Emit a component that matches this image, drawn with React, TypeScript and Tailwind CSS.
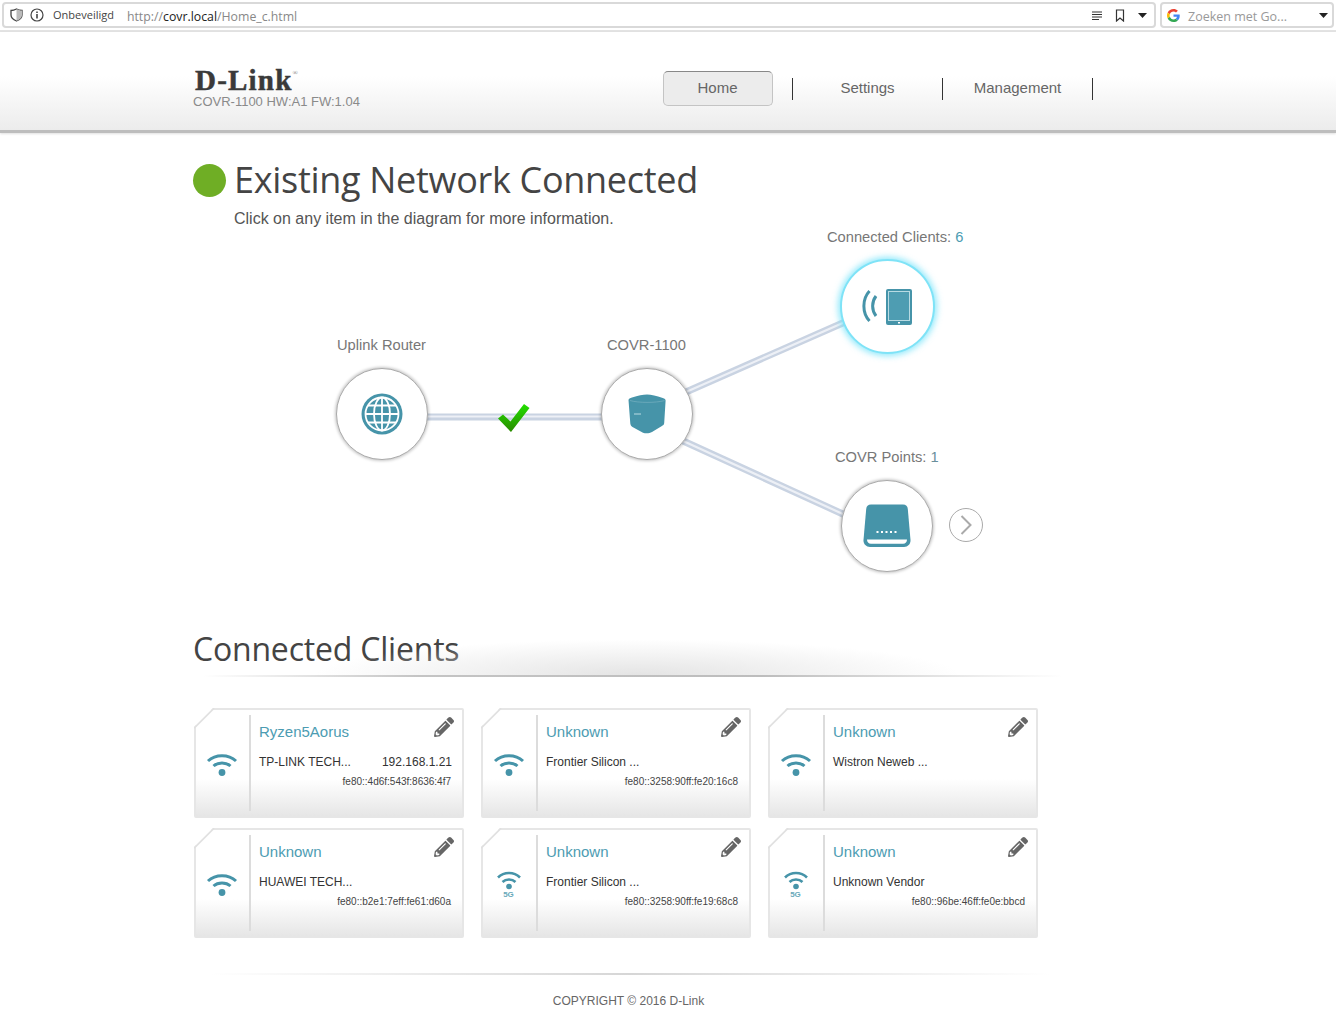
import { FaPencilAlt } from 'react-icons/fa';

const TEAL = '#4694a9';

const CLIENTS = [
  { name: 'Ryzen5Aorus', vendor: 'TP-LINK TECH...', ip: '192.168.1.21', mac: 'fe80::4d6f:543f:8636:4f7', five: false },
  { name: 'Unknown', vendor: 'Frontier Silicon ...', ip: '', mac: 'fe80::3258:90ff:fe20:16c8', five: false },
  { name: 'Unknown', vendor: 'Wistron Neweb ...', ip: '', mac: '', five: false },
  { name: 'Unknown', vendor: 'HUAWEI TECH...', ip: '', mac: 'fe80::b2e1:7eff:fe61:d60a', five: false },
  { name: 'Unknown', vendor: 'Frontier Silicon ...', ip: '', mac: 'fe80::3258:90ff:fe19:68c8', five: true },
  { name: 'Unknown', vendor: 'Unknown Vendor', ip: '', mac: 'fe80::96be:46ff:fe0e:bbcd', five: true },
];

function WifiIcon({ five }: { five: boolean }) {
  if (five) {
    return (
      <div className="flex flex-col items-center">
        <svg width="26" height="22" viewBox="0 0 26 22" fill="none" stroke={TEAL} strokeWidth="2.6">
          <path d="M2 8.500C8 2.500 18 2.500 24 8.500" />
          <path d="M6.500 13C10 9.600 16 9.600 19.500 13" />
          <circle cx="13" cy="17.500" r="2.800" fill={TEAL} stroke="none" />
        </svg>
        <span className="text-[8px] leading-[8px] font-bold text-[#6aa9ba]">5G</span>
      </div>
    );
  }
  return (
    <svg width="32" height="24" viewBox="0 0 32 24" fill="none" stroke={TEAL} strokeWidth="3">
      <path d="M2 9C9.500 2 22.500 2 30 9" />
      <path d="M7.500 14C12 10 20 10 24.500 14" />
      <circle cx="16" cy="20.500" r="3.400" fill={TEAL} stroke="none" />
    </svg>
  );
}

function ClientCard({ client }: { client: typeof CLIENTS[0] }) {
  return (
    <div className="relative h-[110px] flex border-2 border-[#e6e6e6] rounded-[2px] bg-gradient-to-b from-white from-65% to-[#e6e6e6] [clip-path:polygon(19px_0,100%_0,100%_100%,0_100%,0_19px)]">
      <svg className="absolute -left-[2px] -top-[2px]" width="21" height="21" viewBox="0 0 21 21">
        <path d="M0 20L20 0" stroke="#e0e0e0" strokeWidth="2" />
      </svg>
      <div className="w-[53px] shrink-0 flex items-center justify-center pt-[2px] -ml-[1px] mr-[1px]">
        <WifiIcon five={client.five} />
      </div>
      <div className="w-[2px] my-[5px] bg-[#dcdcdc]" />
      <div className="flex-1 min-w-0 pl-[8px] pr-[10px] pt-[12px]">
        <div className="flex items-start justify-between">
          <span className="text-[15px] leading-[20px] text-[#4c9cb2]">{client.name}</span>
          <FaPencilAlt className="text-[#666666] -mt-[5px] -mr-[2px]" size={20} />
        </div>
        <div className="flex justify-between mt-[10px] text-[12px] leading-[20px] text-[#333333]">
          <span>{client.vendor}</span>
          <span>{client.ip}</span>
        </div>
        <div className="text-right pr-[1px] text-[10px] leading-[20px] text-[#444444]">{client.mac}</div>
      </div>
    </div>
  );
}

function Circle({ left, top, size, glow, children }: { left: number; top: number; size: number; glow?: boolean; children: React.ReactNode }) {
  return (
    <div
      className={
        glow
          ? 'absolute rounded-full bg-white flex items-center justify-center border-2 border-[#7fe3f7] shadow-[0_0_6px_2px_rgba(110,225,250,0.75)]'
          : 'absolute rounded-full bg-white flex items-center justify-center border border-[#aaaaaa] shadow-[0_0_3px_1px_rgba(0,0,0,0.22)]'
      }
      style={{ left, top, width: size, height: size }}
    >
      {children}
    </div>
  );
}

function Label({ left, top, children }: { left: number; top: number; children: React.ReactNode }) {
  return (
    <div className="absolute text-[14.7px] leading-[20px] text-[#777777] whitespace-nowrap" style={{ left, top }}>
      {children}
    </div>
  );
}

function Diagram() {
  return (
    <div className="relative h-[370px]">
      {/* connector lines */}
      <svg className="absolute left-0 top-0" width="1336" height="370" fill="none">
        <g stroke="#c9d3e2" strokeWidth="7">
          <path d="M426 185H603" />
          <path d="M686 160L845 90" />
          <path d="M681 208L845 283" />
        </g>
        <g stroke="#edf0f6" strokeWidth="2.2">
          <path d="M426 184.500H603" />
          <path d="M686 160L845 90" />
          <path d="M681 208L845 283" />
        </g>
      </svg>

      <Label left={337} top={103}>Uplink Router</Label>
      <Label left={607} top={103}>COVR-1100</Label>
      <Label left={827} top={-5}>Connected Clients: <span className="text-[#4c9cb2]">6</span></Label>
      <Label left={835} top={215}>COVR Points: <span className="text-[#6a8f9c]">1</span></Label>

      <Circle left={336} top={136} size={92}>
        <svg width="42" height="42" viewBox="0 0 42 42" fill="none" stroke={TEAL}>
          <circle cx="21" cy="21" r="20.500" fill={TEAL} stroke="none" />
          <g stroke="#ffffff" strokeWidth="1.800">
            <circle cx="21" cy="21" r="16.500" />
            <ellipse cx="21" cy="21" rx="8" ry="16.500" />
            <path d="M21 4.500V37.500M4.500 21H37.500M7 12.500H35M7 29.500H35" />
          </g>
        </svg>
      </Circle>

      <Circle left={601} top={136} size={92}>
        <svg width="38" height="40" viewBox="0 0 38 40" className="-ml-[1px] -mt-[1px]">
          <path d="M0.500 6C0.500 4.500 2 4 4 3.400C10 1.600 15 0.400 19 0.400C23 0.400 29 2 34 3.800C36 4.500 37.600 5 37.600 6.600L36.200 29C36 30.800 35.200 31.400 33.500 32.200L24 38C21.500 39.600 17.500 39.600 15 38.800L4.500 33C3 32 2.500 31 2.300 29.500Z" fill={TEAL} />
          <path d="M2 6.500C10 9 28 9 36.500 6.600" fill="none" stroke="#7fb6c5" strokeWidth="0.600" />
          <path d="M6 20H13" stroke="#b9dbe3" strokeWidth="1" />
        </svg>
      </Circle>

      <Circle left={840} top={27} size={95} glow>
        <svg width="52" height="38" viewBox="0 0 52 38" className="-ml-[1px]" fill="none">
          <path d="M8.500 3C1 11 1 25 8.500 33" stroke={TEAL} strokeWidth="3" />
          <path d="M15 8C10.500 14 10.500 22 15 28" stroke={TEAL} strokeWidth="3" />
          <rect x="25" y="1" width="26" height="36" rx="2" fill={TEAL} />
          <rect x="27.500" y="3.500" width="21" height="29" fill="#4e9db2" stroke="#b8dbe3" strokeWidth="1" />
          <rect x="37" y="34" width="2" height="1.500" fill="#ffffff" />
        </svg>
      </Circle>

      <Circle left={841} top={248} size={92}>
        <svg width="48" height="44" viewBox="0 0 48 44">
          <path d="M8 0.500H40C43 0.500 44.500 2 44.800 5L47.500 36C47.800 40 45 43 41 43H7C3 43 0.200 40 0.500 36L3.200 5C3.500 2 5 0.500 8 0.500Z" fill={TEAL} />
          <path d="M4 35.500H44C44 38 42.500 39.800 40 39.800H8C5.500 39.800 4 38 4 35.500Z" fill="#ffffff" />
          <g fill="#ffffff">
            <rect x="13.500" y="27" width="2" height="2" />
            <rect x="18" y="27" width="2" height="2" />
            <rect x="22.500" y="27" width="2" height="2" />
            <rect x="27" y="27" width="2" height="2" />
            <rect x="31.500" y="27" width="2" height="2" />
          </g>
        </svg>
      </Circle>

      <div className="absolute left-[949px] top-[276px] w-[34px] h-[34px] rounded-full border border-[#aaaaaa] bg-white flex items-center justify-center">
        <svg width="12" height="20" viewBox="0 0 12 20" fill="none" stroke="#aaaaaa" strokeWidth="2">
          <path d="M1.500 1L10.500 10L1.500 19" />
        </svg>
      </div>

      {/* check mark on the uplink */}
      <svg className="absolute left-[497px] top-[171px]" width="34" height="30" viewBox="0 0 34 30">
        <defs>
          <linearGradient id="chk" x1="0" y1="0" x2="0" y2="1">
            <stop offset="0" stopColor="#22e000" />
            <stop offset="1" stopColor="#2b8a00" />
          </linearGradient>
        </defs>
        <path d="M1 15.500L6 11.500L13.500 18.500L27 1L32.500 5L14 29Z" fill="url(#chk)" />
      </svg>
    </div>
  );
}

export default function App() {
  return (
    <div className="w-[1336px] h-[1020px] overflow-hidden bg-white font-['Liberation_Sans',Arial,sans-serif]">
      {/* browser toolbar */}
      <div className="h-[32px] flex gap-[4px] pt-[2px] px-[2px] border-b-2 border-[#e3e3e3] font-['Open_Sans',sans-serif]">
        <div className="flex-1 h-[26px] flex items-center border-2 border-[#d9d9d9] rounded-[4px] pl-[6px] pr-[6px]">
          <svg width="13" height="14" viewBox="0 0 13 14" fill="none" stroke="#444444" strokeWidth="1.300">
            <path d="M1 2.500C3 2.500 5 1.800 6.500 1C8 1.800 10 2.500 12 2.500V7C12 10 9 12 6.500 13C4 12 1 10 1 7Z" />
            <path d="M6.500 1C8 1.800 10 2.500 12 2.500V7C12 10 9 12 6.500 13Z" fill="#bbbbbb" stroke="none" />
          </svg>
          <svg className="ml-[7px]" width="14" height="14" viewBox="0 0 14 14" fill="none" stroke="#444444" strokeWidth="1.200">
            <circle cx="7" cy="7" r="6" />
            <path d="M7 6V10.500M7 3.500V5" strokeWidth="1.600" />
          </svg>
          <span className="ml-[9px] text-[11px] text-[#444444]">Onbeveiligd</span>
          <span className="ml-[13px] mt-[5px] text-[12.3px] text-[#888888]">
            http://<span className="text-[#222222]">covr.local</span>/Home_c.html
          </span>
          <div className="flex-1" />
          <svg width="12" height="9" viewBox="0 0 12 9" stroke="#333333" strokeWidth="1">
            <path d="M1 1H11M1 3.500H11M1 6H11M1 8.500H8" />
          </svg>
          <svg className="ml-[12px]" width="10" height="13" viewBox="0 0 10 13" fill="none" stroke="#333333" strokeWidth="1.200">
            <path d="M1.500 1H8.500V12L5 9L1.500 12Z" />
          </svg>
          <svg className="ml-[13px]" width="9" height="5" viewBox="0 0 9 5"><path d="M0 0H9L4.500 5Z" fill="#222222" /></svg>
          <div className="w-[1px]" />
        </div>
        <div className="w-[174px] h-[26px] flex items-center border-2 border-[#d9d9d9] rounded-[4px] pl-[5px] pr-[4px]">
          <svg width="13" height="13" viewBox="0 0 48 48">
            <path fill="#EA4335" d="M24 9.500c3.500 0 6.700 1.200 9.200 3.600l6.900-6.900C35.900 2.400 30.500 0 24 0 14.600 0 6.500 5.400 2.600 13.200l8 6.200C12.500 13.700 17.800 9.500 24 9.500z" />
            <path fill="#4285F4" d="M47 24.500c0-1.600-.1-3.100-.4-4.500H24v9h13c-.6 3-2.200 5.500-4.700 7.200l7.700 6C44.500 37.500 47 31.600 47 24.500z" />
            <path fill="#FBBC05" d="M10.500 28.600c-.5-1.400-.8-3-.8-4.600s.3-3.200.8-4.600l-8-6.200C.9 16.500 0 20.100 0 24s.9 7.500 2.600 10.800l7.900-6.200z" />
            <path fill="#34A853" d="M24 48c6.500 0 11.900-2.100 15.900-5.800l-7.700-6c-2.100 1.500-4.900 2.300-8.200 2.300-6.200 0-11.500-4.200-13.400-9.900l-8 6.200C6.500 42.600 14.600 48 24 48z" />
          </svg>
          <span className="ml-[8px] mt-[5px] text-[12.500px] text-[#999999]">Zoeken met Go...</span>
          <div className="flex-1" />
          <svg width="9" height="5" viewBox="0 0 9 5"><path d="M0 0H9L4.500 5Z" fill="#222222" /></svg>
        </div>
      </div>

      {/* device header */}
      <header className="h-[101px] flex items-start pl-[193px] bg-gradient-to-b from-white from-45% to-[#ececec] border-b-[3px] border-[#bdbdbd] shadow-[0_1px_2px_rgba(0,0,0,0.12)]">
        <div className="w-[450px] pt-[36px]">
          <div className="h-[24px] mb-[3px] font-['Liberation_Serif',serif] font-bold text-[29px] leading-[24px] text-[#3a3a3a] tracking-[1.2px] [-webkit-text-stroke:0.5px_#3a3a3a] pl-[2px] flex items-start">
            D-Link<span className="text-[7px] leading-[10px] font-normal text-[#777777] tracking-normal [-webkit-text-stroke:0]">®</span>
          </div>
          <div className="text-[13px] leading-[14px] text-[#8a8a8a]">COVR-1100 HW:A1 FW:1.04</div>
        </div>
        <nav className="flex items-center text-[15px] text-[#666666] pt-[39px]">
          <div className="w-[149px] flex justify-center">
            <div className="w-[110px] h-[35px] flex items-center justify-center rounded-[5px] bg-[#ececec] border border-[#c4c4c4] border-t-[#888888]">Home</div>
          </div>
          <div className="w-px h-[22px] bg-[#333333]" />
          <div className="w-[149px] flex justify-center">Settings</div>
          <div className="w-px h-[22px] bg-[#333333]" />
          <div className="w-[149px] flex justify-center">Management</div>
          <div className="w-px h-[22px] bg-[#333333]" />
        </nav>
      </header>

      {/* status */}
      <section className="h-[99px] pl-[193px] pt-[22px]">
        <div className="flex items-center gap-[8px]">
          <div className="w-[33px] h-[33px] rounded-full bg-[#6fae25]" />
          <h1 className="font-['Open_Sans',sans-serif] text-[36px] leading-[50px] text-[#444444] tracking-[-0.3px]">Existing Network Connected</h1>
        </div>
        <p className="pl-[41px] mt-[4px] text-[16px] leading-[20px] text-[#555555]">Click on any item in the diagram for more information.</p>
      </section>

      <Diagram />

      {/* clients */}
      <section className="pl-[193px] pt-[25px]">
        <h2 className="font-['Open_Sans',sans-serif] text-[32px] leading-[44px] text-[#444444] tracking-[-0.2px]">Connected Clients</h2>
        <div className="relative h-[2px] mt-[4px] ml-[10px] w-[860px] bg-[linear-gradient(to_right,transparent,#c4c4c4_25%,#bdbdbd_65%,transparent)]">
          <div className="absolute left-[110px] right-[100px] bottom-[2px] h-[36px] bg-[radial-gradient(ellipse_at_50%_100%,#e4e4e4,transparent_70%)]" />
        </div>
        <div className="grid grid-cols-[270px_270px_270px] gap-x-[17px] gap-y-[10px] ml-[1px] mt-[31px]">
          {CLIENTS.map((client, i) => (
            <ClientCard key={i} client={client} />
          ))}
        </div>
      </section>

      <footer className="mt-[35px] ml-[210px] w-[840px]">
        <div className="h-[2px] bg-gradient-to-r from-transparent via-[#d6d6d6] to-transparent" />
        <div className="mt-[18px] pr-[3px] text-center text-[12px] leading-[16px] text-[#666666]">COPYRIGHT © 2016 D-Link</div>
      </footer>
    </div>
  );
}
